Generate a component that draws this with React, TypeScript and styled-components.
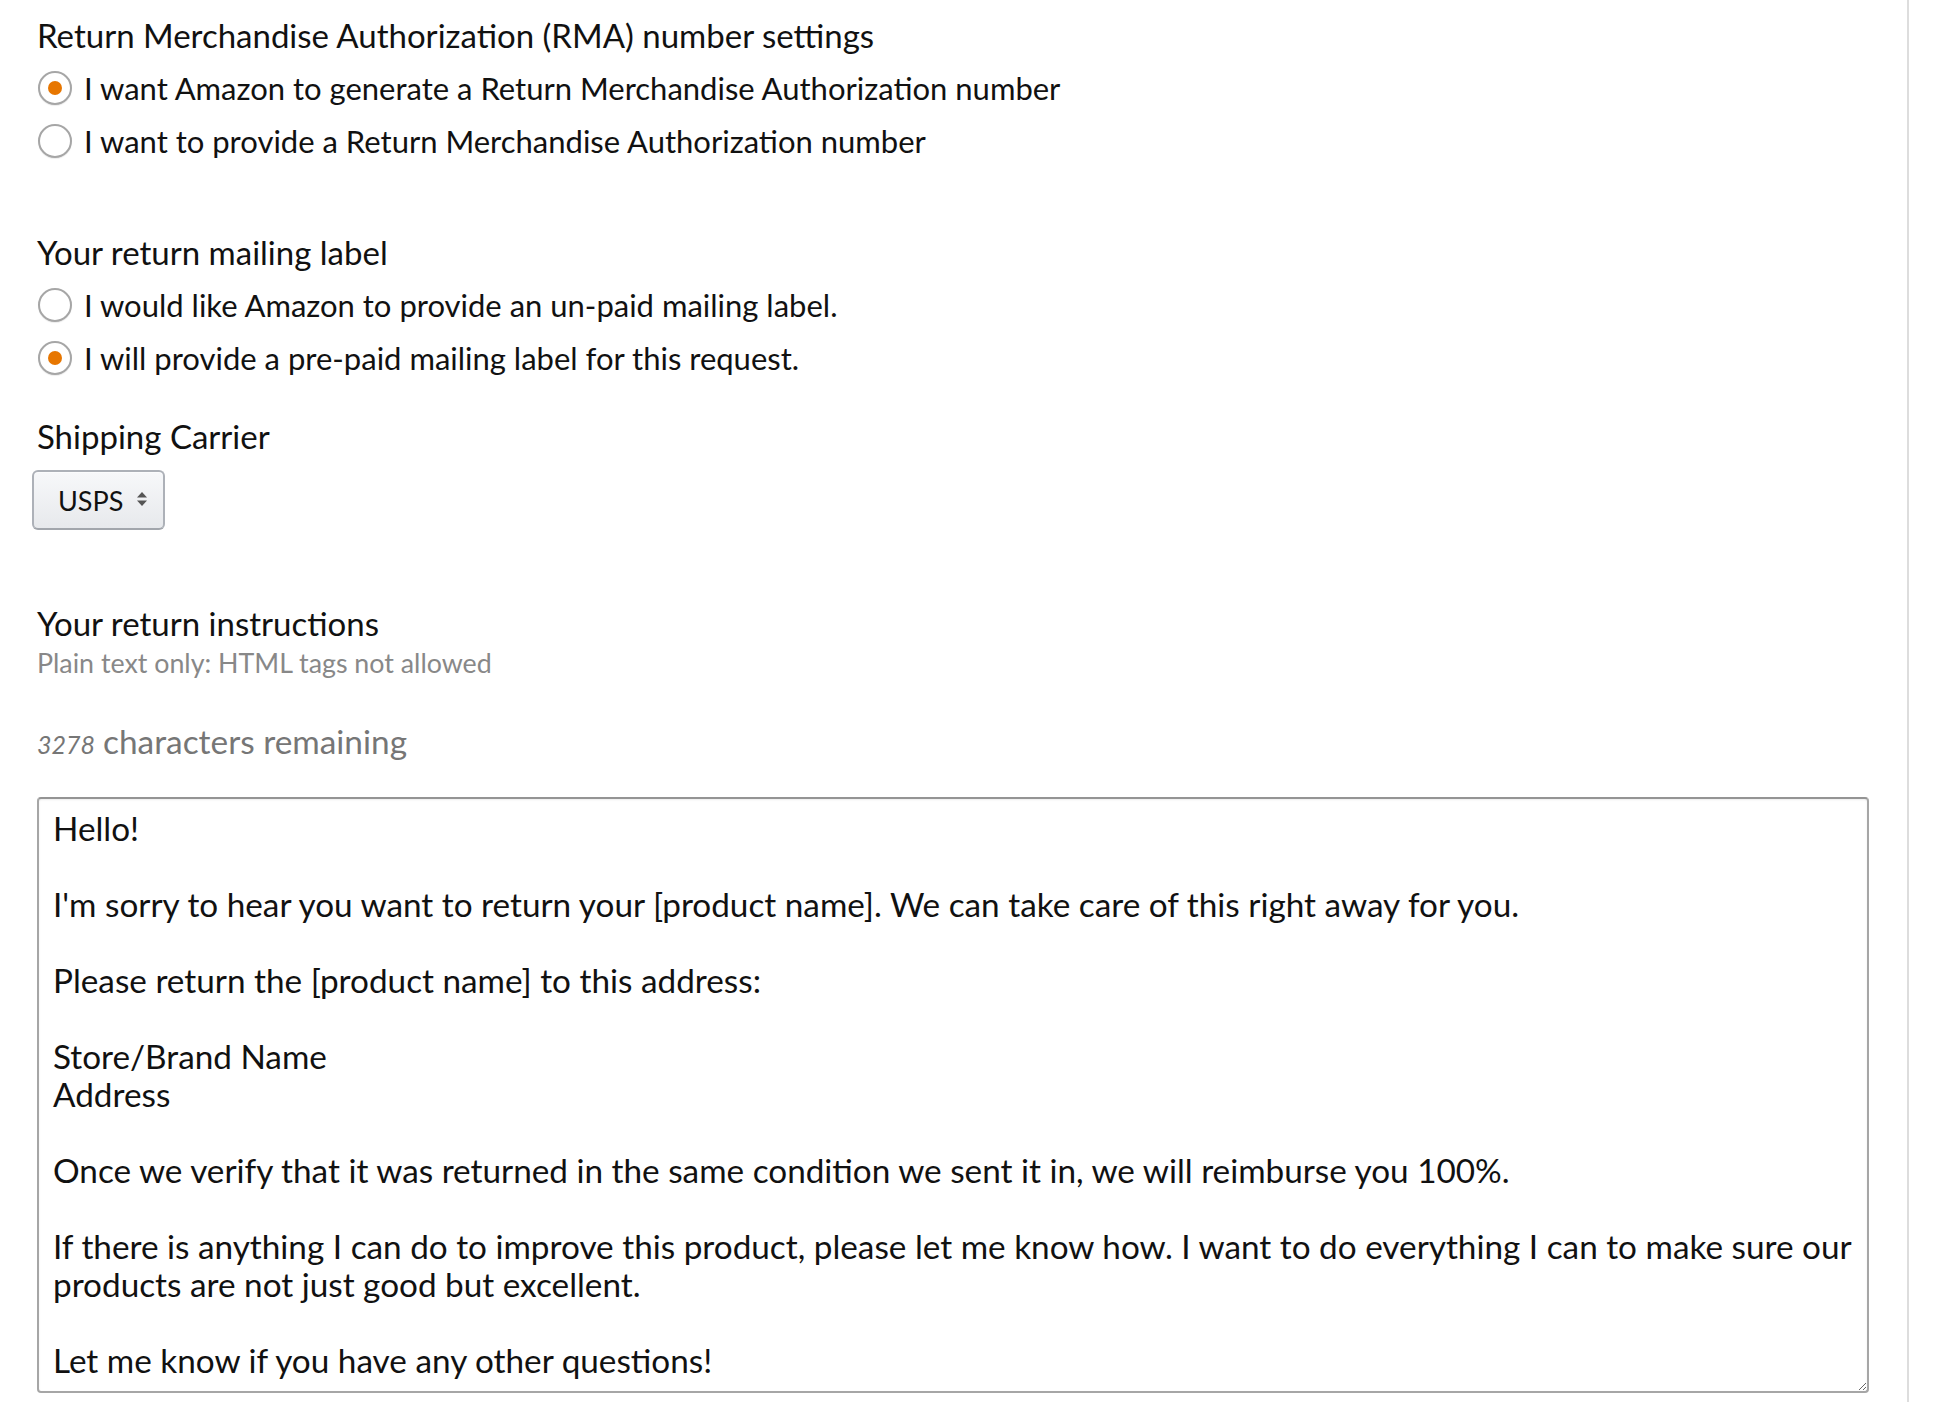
import React from "react";
import styled, { createGlobalStyle } from "styled-components";

const GlobalStyle = createGlobalStyle`
  html, body { margin: 0; padding: 0; background: #ffffff; }
  body { font-family: Lato, "Noto Sans", sans-serif; color: #111111; }
  * { box-sizing: border-box; }
`;

const Page = styled.div`
  display: flex;
  min-height: 1402px;
  background: #ffffff;
`;

const Panel = styled.main`
  width: 1909px;
  border-right: 2px solid #dddddd;
  padding: 15px 38px 0 37px;
  display: flex;
  flex-direction: column;
`;

const Section = styled.section<{ $top: number }>`
  margin-top: ${(p) => p.$top}px;
  display: flex;
  flex-direction: column;
  align-items: flex-start;
`;

const Heading = styled.h2`
  margin: 0;
  font-size: 33px;
  font-weight: 400;
  line-height: 40px;
  color: #111111;
`;

const RadioList = styled.div`
  margin-top: 6px;
  display: flex;
  flex-direction: column;
`;

const RadioRow = styled.label`
  display: flex;
  align-items: center;
  height: 53px;
  gap: 12px;
  font-size: 31px;
  line-height: 40px;
  cursor: pointer;
`;

const RadioCircle = styled.span<{ $checked: boolean }>`
  width: 34px;
  height: 34px;
  margin-left: 1px;
  border-radius: 50%;
  border: 2px solid #a6a6a6;
  background: #ffffff;
  box-shadow: 0 1px 1px rgba(0, 0, 0, 0.08);
  display: flex;
  align-items: center;
  justify-content: center;
  flex-shrink: 0;
  &::after {
    content: "";
    width: 14px;
    height: 14px;
    border-radius: 50%;
    background: #e77600;
    display: ${(p) => (p.$checked ? "block" : "none")};
  }
`;

const SelectWrap = styled.div`
  position: relative;
  margin: 14px 0 0 -5px;
  width: 133px;
  height: 60px;
`;

const CarrierSelect = styled.select`
  appearance: none;
  -webkit-appearance: none;
  width: 100%;
  height: 100%;
  border: 2px solid #adb1b8;
  border-bottom-color: #a2a6ac;
  border-radius: 6px;
  background: linear-gradient(to bottom, #f7f8fa, #e7e9ec);
  font-family: Lato, "Noto Sans", sans-serif;
  font-size: 27px;
  color: #111111;
  padding: 0 0 0 24px;
  outline: none;
  box-shadow: inset 0 1px 0 rgba(255, 255, 255, 0.6);
`;

const ArrowIcon = styled.svg`
  position: absolute;
  left: 104px;
  top: 21px;
  width: 12px;
  height: 16px;
  pointer-events: none;
`;

const Hint = styled.div`
  margin-top: 5px;
  font-size: 26.8px;
  line-height: 30px;
  color: #888888;
`;

const Counter = styled.div`
  margin-top: 42px;
  font-size: 33.4px;
  line-height: 42px;
  color: #767676;
  display: flex;
  align-items: baseline;
  gap: 8px;
`;

const CountNumber = styled.em`
  font-size: 25px;
  font-style: italic;
`;

const Instructions = styled.textarea`
  margin-top: 32px;
  width: 1832px;
  height: 596px;
  border: 2px solid #a6a6a6;
  border-top-color: #949494;
  border-radius: 4px;
  padding: 10px 14px;
  font-family: Lato, "Noto Sans", sans-serif;
  font-size: 33.3px;
  line-height: 38px;
  color: #111111;
  white-space: pre;
  overflow: hidden;
  outline: none;
  box-shadow: inset 0 1px 2px rgba(0, 0, 0, 0.08);
`;

const instructionsText = `Hello!

I'm sorry to hear you want to return your [product name]. We can take care of this right away for you.

Please return the [product name] to this address:

Store/Brand Name
Address

Once we verify that it was returned in the same condition we sent it in, we will reimburse you 100%.

If there is anything I can do to improve this product, please let me know how. I want to do everything I can to make sure our
products are not just good but excellent.

Let me know if you have any other questions!`;

type Option = { id: string; label: string };

function RadioGroup({ name, options, value }: { name: string; options: Option[]; value: string }) {
  return (
    <RadioList role="radiogroup">
      {options.map((o) => (
        <RadioRow key={o.id}>
          <RadioCircle $checked={o.id === value} aria-hidden="true" />
          <span>{o.label}</span>
          <input type="radio" name={name} defaultChecked={o.id === value} hidden />
        </RadioRow>
      ))}
    </RadioList>
  );
}

export default function App() {
  return (
    <Page>
      <GlobalStyle />
      <Panel>
        <Section $top={0}>
          <Heading>Return Merchandise Authorization (RMA) number settings</Heading>
          <RadioGroup
            name="rma"
            value="amazon"
            options={[
              { id: "amazon", label: "I want Amazon to generate a Return Merchandise Authorization number" },
              { id: "self", label: "I want to provide a Return Merchandise Authorization number" },
            ]}
          />
        </Section>

        <Section $top={65}>
          <Heading>Your return mailing label</Heading>
          <RadioGroup
            name="label"
            value="prepaid"
            options={[
              { id: "unpaid", label: "I would like Amazon to provide an un-paid mailing label." },
              { id: "prepaid", label: "I will provide a pre-paid mailing label for this request." },
            ]}
          />
        </Section>

        <Section $top={32}>
          <Heading>Shipping Carrier</Heading>
          <SelectWrap>
            <CarrierSelect defaultValue="USPS">
              <option>USPS</option>
              <option>UPS</option>
              <option>FedEx</option>
            </CarrierSelect>
            <ArrowIcon viewBox="0 0 12 16" aria-hidden="true">
              <polygon points="1,6.5 6,1 11,6.5" fill="#555555" />
              <polygon points="1,9.5 6,15 11,9.5" fill="#555555" />
            </ArrowIcon>
          </SelectWrap>
        </Section>

        <Section $top={73}>
          <Heading>Your return instructions</Heading>
          <Hint>Plain text only: HTML tags not allowed</Hint>
          <Counter>
            <CountNumber>3278</CountNumber>
            <span>characters remaining</span>
          </Counter>
          <Instructions defaultValue={instructionsText} spellCheck={false} />
        </Section>
      </Panel>
    </Page>
  );
}
